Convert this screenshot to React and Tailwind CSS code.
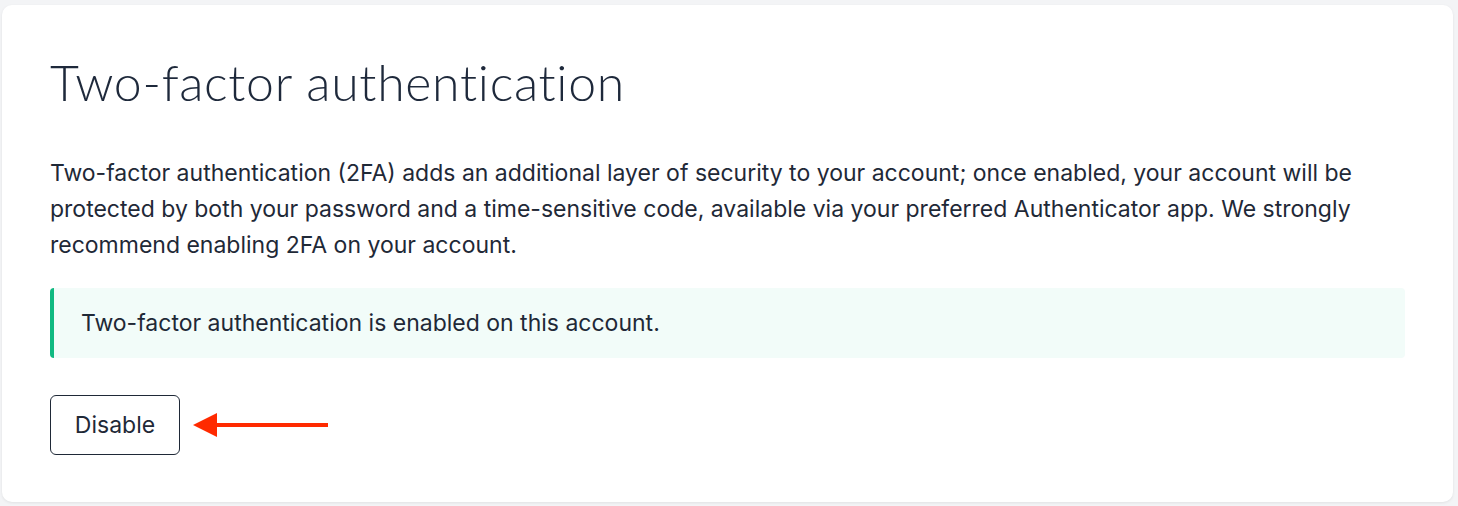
export default function App() {
  return (
    <div className="w-[1458px] h-[506px] bg-[#f3f4f6] pt-[5px] pl-[2px] pr-[5px] pb-[4px]">
      <div className="h-[497px] bg-white rounded-[10px] shadow-[0_1px_3px_rgba(0,0,0,0.08)] px-12 pt-[47px] pb-[47px] flex flex-col items-start">
        <h1 className="text-[50px] leading-[60px] font-light text-[#1e293b] font-['Lato',sans-serif] tracking-[0.7px]">
          Two-factor authentication
        </h1>
        <p className="mt-[43px] text-[23px] leading-[36px] text-[#1f2937] font-['Inter',sans-serif]">
          Two-factor authentication (2FA) adds an additional layer of security to your account; once enabled, your account will be protected by both your password and a time-sensitive code, available via your preferred Authenticator app. We strongly recommend enabling 2FA on your account.
        </p>
        <div className="mt-[25px] self-stretch h-[70px] flex items-center bg-[#f2fcf9] border-l-4 border-[#10b981] rounded-[4px] pl-[27px] text-[23px] text-[#1f2937] font-['Inter',sans-serif]">
          Two-factor authentication is enabled on this account.
        </div>
        <div className="mt-[37px] flex items-center">
          <button className="w-[130px] h-[60px] border border-[#1f2937] rounded-[6px] text-[23px] text-[#1f2937] font-['Inter',sans-serif] bg-white">
            Disable
          </button>
          <svg width="136" height="26" viewBox="0 0 136 26" className="ml-[13px]">
            <polygon points="0,13 24,1 24,25" fill="#ff2a00" />
            <rect x="22" y="11" width="113" height="4" fill="#ff2a00" />
          </svg>
        </div>
      </div>
    </div>
  );
}
